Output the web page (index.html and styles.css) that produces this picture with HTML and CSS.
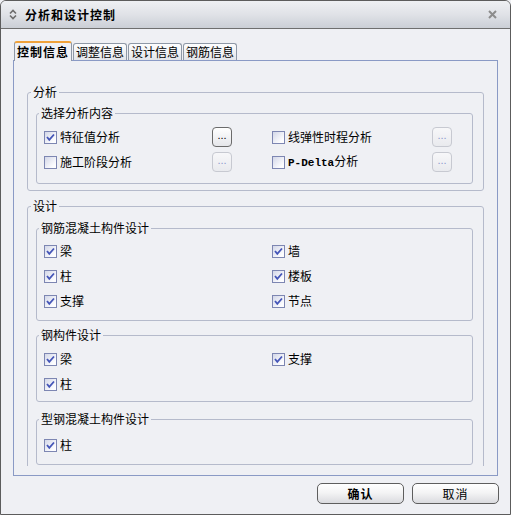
FILE: index.html
```html
<!DOCTYPE html>
<html lang="zh-CN">
<head>
<meta charset="utf-8">
<title>分析和设计控制</title>
<link rel="stylesheet" href="styles.css">
</head>
<body>
<div class="window">
  <div class="titlebar">
    <svg class="ticon" width="8" height="11" viewBox="0 0 8 11"><path d="M1 4.5 L4 1.5 L7 4.5" fill="none" stroke="#6d6d6d" stroke-width="1.6"/><path d="M1 6.5 L4 9.5 L7 6.5" fill="none" stroke="#6d6d6d" stroke-width="1.6"/></svg>
    <span class="title">分析和设计控制</span>
    <svg class="close" width="9" height="9" viewBox="0 0 9 9"><path d="M1 1 L8 8 M8 1 L1 8" fill="none" stroke="#8c8c8c" stroke-width="2"/></svg>
  </div>
  <div class="client">
    <div class="tabs">
      <div class="tab active">控制信息</div>
      <div class="tab">调整信息</div>
      <div class="tab">设计信息</div>
      <div class="tab">钢筋信息</div>
    </div>
    <div class="panel">
      <div class="scroll">
        <fieldset class="group g-analysis">
          <legend>分析</legend>
          <fieldset class="group g-select">
            <legend>选择分析内容</legend>
            <div class="grid grid-analysis">
              <div class="item">
                <span class="cb"><svg width="11" height="11" viewBox="0 0 11 11"><path d="M2 5 L4.3 7.8 L9 2.5" fill="none" stroke="#4455b8" stroke-width="1.8"/></svg></span>
                <span class="lbl">特征值分析</span>
                <span class="dots">...</span>
              </div>
              <div class="item">
                <span class="cb"></span>
                <span class="lbl">线弹性时程分析</span>
                <span class="dots disabled">...</span>
              </div>
              <div class="item">
                <span class="cb"></span>
                <span class="lbl">施工阶段分析</span>
                <span class="dots disabled">...</span>
              </div>
              <div class="item">
                <span class="cb"></span>
                <span class="lbl"><span class="latin">P-Delta</span>分析</span>
                <span class="dots disabled">...</span>
              </div>
            </div>
          </fieldset>
        </fieldset>

        <fieldset class="group g-design">
          <legend>设计</legend>
          <fieldset class="group g-rc">
            <legend>钢筋混凝土构件设计</legend>
            <div class="grid grid-design">
              <div class="item"><span class="cb"><svg width="11" height="11" viewBox="0 0 11 11"><path d="M2 5 L4.3 7.8 L9 2.5" fill="none" stroke="#4455b8" stroke-width="1.8"/></svg></span><span class="lbl">梁</span></div>
              <div class="item"><span class="cb"><svg width="11" height="11" viewBox="0 0 11 11"><path d="M2 5 L4.3 7.8 L9 2.5" fill="none" stroke="#4455b8" stroke-width="1.8"/></svg></span><span class="lbl">墙</span></div>
              <div class="item"><span class="cb"><svg width="11" height="11" viewBox="0 0 11 11"><path d="M2 5 L4.3 7.8 L9 2.5" fill="none" stroke="#4455b8" stroke-width="1.8"/></svg></span><span class="lbl">柱</span></div>
              <div class="item"><span class="cb"><svg width="11" height="11" viewBox="0 0 11 11"><path d="M2 5 L4.3 7.8 L9 2.5" fill="none" stroke="#4455b8" stroke-width="1.8"/></svg></span><span class="lbl">楼板</span></div>
              <div class="item"><span class="cb"><svg width="11" height="11" viewBox="0 0 11 11"><path d="M2 5 L4.3 7.8 L9 2.5" fill="none" stroke="#4455b8" stroke-width="1.8"/></svg></span><span class="lbl">支撑</span></div>
              <div class="item"><span class="cb"><svg width="11" height="11" viewBox="0 0 11 11"><path d="M2 5 L4.3 7.8 L9 2.5" fill="none" stroke="#4455b8" stroke-width="1.8"/></svg></span><span class="lbl">节点</span></div>
            </div>
          </fieldset>
          <fieldset class="group g-steel">
            <legend>钢构件设计</legend>
            <div class="grid grid-design">
              <div class="item"><span class="cb"><svg width="11" height="11" viewBox="0 0 11 11"><path d="M2 5 L4.3 7.8 L9 2.5" fill="none" stroke="#4455b8" stroke-width="1.8"/></svg></span><span class="lbl">梁</span></div>
              <div class="item"><span class="cb"><svg width="11" height="11" viewBox="0 0 11 11"><path d="M2 5 L4.3 7.8 L9 2.5" fill="none" stroke="#4455b8" stroke-width="1.8"/></svg></span><span class="lbl">支撑</span></div>
              <div class="item"><span class="cb"><svg width="11" height="11" viewBox="0 0 11 11"><path d="M2 5 L4.3 7.8 L9 2.5" fill="none" stroke="#4455b8" stroke-width="1.8"/></svg></span><span class="lbl">柱</span></div>
            </div>
          </fieldset>
          <fieldset class="group g-src">
            <legend>型钢混凝土构件设计</legend>
            <div class="grid grid-design">
              <div class="item"><span class="cb"><svg width="11" height="11" viewBox="0 0 11 11"><path d="M2 5 L4.3 7.8 L9 2.5" fill="none" stroke="#4455b8" stroke-width="1.8"/></svg></span><span class="lbl">柱</span></div>
            </div>
          </fieldset>
        </fieldset>
      </div>
    </div>
    <div class="buttons">
      <button class="btn primary">确认</button>
      <button class="btn">取消</button>
    </div>
  </div>
</div>
</body>
</html>
```
FILE: styles.css
```css
html, body {
  margin: 0;
  padding: 0;
  background: #eff0f4;
}
body {
  font-family: "Noto Sans CJK SC", "Noto Sans", sans-serif;
  font-size: 12px;
  color: #000;
}
.window {
  width: 511px;
  height: 515px;
  box-sizing: border-box;
  border: 1px solid #5c5c5c;
  border-radius: 6px 6px 0 0;
  background: #eff0f4;
  display: flex;
  flex-direction: column;
  overflow: hidden;
}
.titlebar {
  flex: none;
  height: 27px;
  border-bottom: 1px solid #6f6f6f;
  background: linear-gradient(#eef0f3, #e0e2e7 50%, #cbcfd6);
  display: flex;
  align-items: center;
}
.ticon {
  margin-left: 8px;
  flex: none;
}
.title {
  margin-left: 8px;
  font-weight: bold;
  letter-spacing: 1px;
  line-height: 14px;
}
.close {
  margin-left: auto;
  margin-right: 13px;
  flex: none;
}
.client {
  flex: 1;
  display: flex;
  flex-direction: column;
  padding: 12px 12px 0;
}
.tabs {
  flex: none;
  height: 20px;
  display: flex;
  align-items: flex-end;
  padding-left: 1px;
  margin-bottom: -1px;
  position: relative;
  z-index: 1;
}
.tab {
  box-sizing: border-box;
  height: 17px;
  margin-bottom: 1px;
  margin-left: 1px;
  padding: 0 2px;
  border: 1px solid #8e98a6;
  border-bottom: none;
  border-radius: 3px 3px 0 0;
  background: linear-gradient(#fdfdfe, #e3e5ea);
  line-height: 16px;
  white-space: nowrap;
}
.tab.active {
  height: 20px;
  margin: 0;
  border-top: 2px solid #f0a23a;
  background: #eff0f4;
  font-weight: bold;
  letter-spacing: 1px;
  line-height: 17px;
}
.panel {
  flex: none;
  height: 416px;
  box-sizing: border-box;
  border: 1px solid #8a9ac5;
  background: #eff0f4;
}
.scroll {
  height: 405px;
  box-sizing: border-box;
  overflow: hidden;
  padding: 24px 13px 0;
}
.group {
  margin: 0;
  min-width: 0;
  border: 1px solid #b5bacb;
  border-radius: 3px;
}
.group > legend {
  padding: 0 2px;
  margin-left: -5px;
  font-size: 12px;
  line-height: 14px;
}
.g-analysis {
  padding: 7px 10px 6px 8px;
}
.g-select {
  padding: 7px 10px 11px 7px;
}
.g-design {
  margin-top: 8px;
  padding: 8px 10px 20px 8px;
}
.g-rc {
  padding: 6px 10px 9px 7px;
}
.g-steel {
  margin-top: 7px;
  padding: 7px 10px 7px 7px;
}
.g-src {
  margin-top: 10px;
  padding: 9px 10px 9px 7px;
}
.grid {
  display: grid;
  row-gap: 5px;
}
.grid-analysis {
  grid-template-columns: 188px 180px;
  column-gap: 40px;
}
.grid-design {
  grid-template-columns: 228px 1fr;
}
.item {
  height: 20px;
  display: flex;
  align-items: center;
}
.cb {
  flex: none;
  width: 13px;
  height: 13px;
  box-sizing: border-box;
  border: 1px solid #7d86b2;
  background: linear-gradient(135deg, #d3d7e8, #fdfdff 80%);
  margin-right: 3px;
  display: flex;
}
.lbl {
  line-height: 14px;
  white-space: nowrap;
}
.latin {
  font-family: "Liberation Mono", monospace;
  font-size: 11px;
  font-weight: bold;
}
.dots {
  margin-left: auto;
  flex: none;
  width: 20px;
  height: 20px;
  box-sizing: border-box;
  border: 1px solid #6b6b6b;
  border-radius: 4px;
  background: linear-gradient(#ffffff, #e5e6ea);
  font-family: "Liberation Sans", sans-serif;
  font-size: 11px;
  line-height: 14px;
  text-align: center;
  color: #000;
}
.dots.disabled {
  border-color: #c7c9d1;
  background: linear-gradient(#f7f7f9, #e9eaee);
  color: #8d98cc;
}
.buttons {
  flex: none;
  display: flex;
  justify-content: flex-end;
  gap: 8px;
  margin-top: 7px;
  margin-right: -1px;
}
.btn {
  width: 87px;
  height: 21px;
  padding: 0;
  border: 1px solid #5e5e5e;
  border-radius: 5px;
  background: linear-gradient(#ffffff, #f4f4f5 45%, #dadbdf);
  font-family: "Noto Sans CJK SC", sans-serif;
  font-size: 12px;
  letter-spacing: 1px;
  color: #000;
  line-height: 19px;
}
.btn.primary {
  font-weight: bold;
}
```
